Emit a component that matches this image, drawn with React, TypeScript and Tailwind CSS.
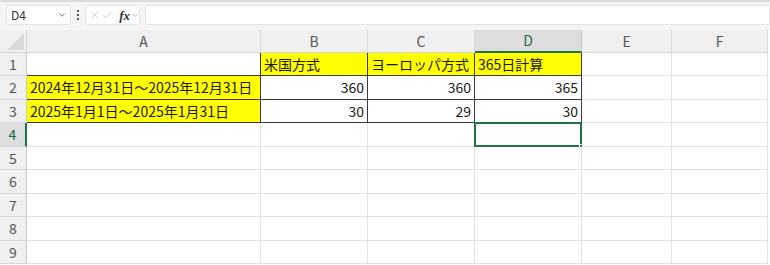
import React from "react";
import { ChevronDown } from "lucide-react";

type Cell = { v: string; yellow?: boolean; right?: boolean; darkR?: boolean; darkB?: boolean };

const COLS = ["A", "B", "C", "D", "E", "F"];
const COL_W = ["w-[234px]", "w-[107px]", "w-[107px]", "w-[107px]", "w-[90px]", "w-[96px]"];
const ROW_H = ["h-[23px]", "h-[24px]", "h-[23px]", "h-[24px]", "h-[23px]", "h-[24px]", "h-[23px]", "h-[24px]", "h-[23px]"];

const empty: Cell = { v: "" };

// rows 1-3 hold the data, the rest are blank
const data: Cell[][] = [
  [
    { v: "", darkR: true, darkB: true },
    { v: "米国方式", yellow: true, darkR: true, darkB: true },
    { v: "ヨーロッパ方式", yellow: true, darkR: true, darkB: true },
    { v: "365日計算", yellow: true, darkR: true, darkB: true },
    empty,
    empty,
  ],
  [
    { v: "2024年12月31日～2025年12月31日", yellow: true, darkR: true, darkB: true },
    { v: "360", right: true, darkR: true, darkB: true },
    { v: "360", right: true, darkR: true, darkB: true },
    { v: "365", right: true, darkR: true, darkB: true },
    empty,
    empty,
  ],
  [
    { v: "2025年1月1日～2025年1月31日", yellow: true, darkR: true, darkB: true },
    { v: "30", right: true, darkR: true, darkB: true },
    { v: "29", right: true, darkR: true, darkB: true },
    { v: "30", right: true, darkR: true, darkB: true },
    empty,
    empty,
  ],
];

const font = "font-['Noto_Sans_CJK_JP','Noto_Sans',sans-serif]";

function Toolbar() {
  return (
    <div className="h-[30px] bg-[#f5f5f5] border-t-2 border-[#dcdcdc] flex items-start pt-[3px] pl-[6px] gap-[5px]">
      <div className="w-[65px] h-[20px] bg-white border border-[#e3e3e3] rounded-[3px] flex items-center justify-between pl-[4px] pr-[3px]">
        <span className={`text-[12px] text-[#333] ${font}`}>D4</span>
        <ChevronDown className="w-[10px] h-[10px] text-[#555]" strokeWidth={2} />
      </div>
      <div className="w-[4px] h-[20px] flex flex-col items-center justify-center gap-[2px]">
        <span className="w-[2px] h-[2px] bg-[#555]" />
        <span className="w-[2px] h-[2px] bg-[#555]" />
        <span className="w-[2px] h-[2px] bg-[#555]" />
      </div>
      <div className="w-[55px] h-[20px] bg-white border border-[#e3e3e3] rounded-[3px] flex items-center pl-[5px] gap-[4px]">
        <svg width="10" height="10" viewBox="0 0 10 10" className="text-[#c0c0c0]">
          <path d="M0.5 0.5L9.5 9.5M9.5 0.5L0.5 9.5" stroke="currentColor" strokeWidth="1" fill="none" />
        </svg>
        <svg width="11" height="10" viewBox="0 0 11 10" className="text-[#c0c0c0]">
          <path d="M0.5 5L4 8.5L10.5 1" stroke="currentColor" strokeWidth="1" fill="none" />
        </svg>
        <span className="ml-[4px] text-[13px] italic font-bold text-[#333] font-['Liberation_Serif',serif] leading-none">
          fx
        </span>
        <ChevronDown className="w-[9px] h-[9px] text-[#777] -ml-[2px]" strokeWidth={2} />
      </div>
      <div className="flex-1 h-[20px] bg-white border border-[#e3e3e3] rounded-l-[3px]" />
    </div>
  );
}

function HeaderRow() {
  return (
    <div className="flex h-[23px]">
      <div className="w-[27px] h-full bg-[#f0f0f0] border-r border-b border-[#d4d4d4] relative overflow-hidden">
        <div className="absolute right-[2px] bottom-[2px] w-0 h-0 border-l-[17px] border-l-transparent border-b-[17px] border-b-[#dadada]" />
      </div>
      {COLS.map((c, i) => {
        const sel = c === "D";
        return (
          <div
            key={c}
            className={`${COL_W[i]} h-full flex items-center justify-center text-[14px] ${font} border-r ${
              sel
                ? "bg-[#dddddd] text-[#1e6b40] border-b-2 border-b-[#217346] border-r-[#c8c8c8]"
                : "bg-[#f0f0f0] text-[#555] border-b border-[#d4d4d4] border-r-[#dadada]"
            }`}
          >
            {c}
          </div>
        );
      })}
    </div>
  );
}

function GridRow({ r }: { r: number }) {
  const cells = data[r] ?? COLS.map(() => empty);
  const rowSel = r === 3;
  return (
    <div className={`flex ${ROW_H[r]}`}>
      <div
        className={`w-[27px] h-full flex items-center justify-center text-[14px] ${font} border-b border-[#d8d8d8] ${
          rowSel
            ? "bg-[#dddddd] text-[#1e6b40] border-r-2 border-r-[#217346]"
            : "bg-[#f0f0f0] text-[#555] border-r border-r-[#c8c8c8]"
        }`}
      >
        {r + 1}
      </div>
      {cells.map((cell, i) => {
        const sel = rowSel && i === 3;
        return (
          <div
            key={i}
            className={`${COL_W[i]} h-full relative flex items-center px-[3px] text-[14px] text-[#1a1a1a] ${font} whitespace-nowrap overflow-visible border-r border-b ${
              cell.yellow ? "bg-[#ffff00]" : "bg-white"
            } ${cell.right ? "justify-end" : "justify-start"} ${
              cell.darkR ? "border-r-[#3a3a3a]" : "border-r-[#e1e1e1]"
            } ${cell.darkB ? "border-b-[#3a3a3a]" : "border-b-[#e1e1e1]"}`}
          >
            {cell.v}
            {sel && (
              <>
                <div className="absolute -left-px -top-px -right-px -bottom-px border-2 border-[#217346]" />
                <div className="absolute -right-[3px] -bottom-[3px] w-[5px] h-[5px] bg-[#217346] border border-white" />
              </>
            )}
          </div>
        );
      })}
    </div>
  );
}

export default function App() {
  return (
    <div className="w-[770px] h-[265px] overflow-hidden bg-white">
      <Toolbar />
      <HeaderRow />
      {ROW_H.map((_, r) => (
        <GridRow key={r} r={r} />
      ))}
    </div>
  );
}
